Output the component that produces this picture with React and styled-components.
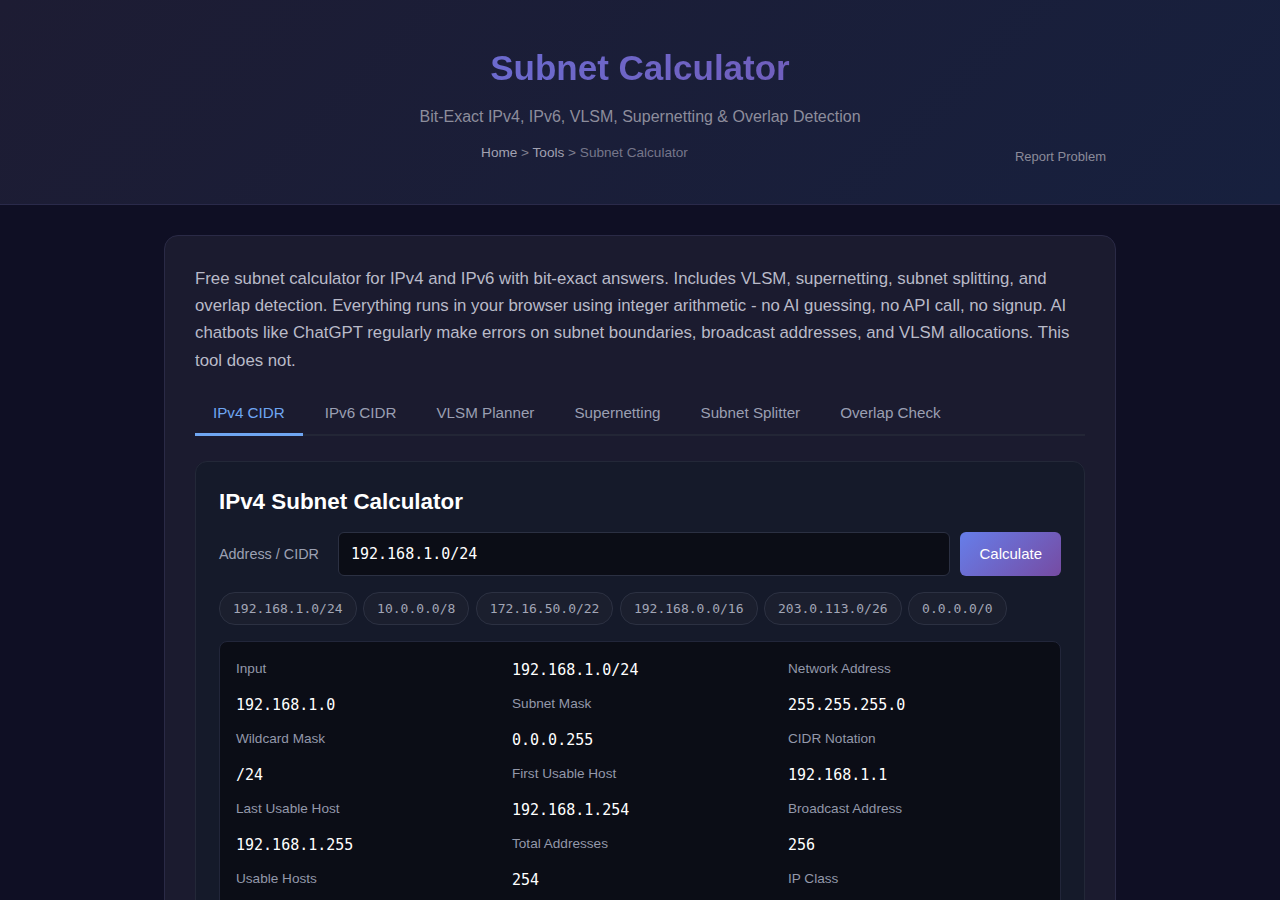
import { createGlobalStyle, styled } from "styled-components";

const GlobalStyle = createGlobalStyle`
  html, body {
    margin: 0;
    padding: 0;
    background: #0f0f24;
    font-family: "Liberation Sans", Arial, sans-serif;
    color: #e4e6f0;
  }
  * {
    box-sizing: border-box;
  }
`;

const tabs = ["IPv4 CIDR", "IPv6 CIDR", "VLSM Planner", "Supernetting", "Subnet Splitter", "Overlap Check"];

const examples = ["192.168.1.0/24", "10.0.0.0/8", "172.16.50.0/22", "192.168.0.0/16", "203.0.113.0/26", "0.0.0.0/0"];

// label / value pairs, they flow through a 3 column grid
const results = [
  ["Input", "192.168.1.0/24"],
  ["Network Address", "192.168.1.0"],
  ["Subnet Mask", "255.255.255.0"],
  ["Wildcard Mask", "0.0.0.255"],
  ["CIDR Notation", "/24"],
  ["First Usable Host", "192.168.1.1"],
  ["Last Usable Host", "192.168.1.254"],
  ["Broadcast Address", "192.168.1.255"],
  ["Total Addresses", "256"],
  ["Usable Hosts", "254"],
  ["IP Class", "C"],
  ["Address Type", "Private (RFC 1918)"],
];

export default function App() {
  return (
    <>
      <GlobalStyle />
      <SHeader>
        <STitle>Subnet Calculator</STitle>
        <SSubtitle>Bit-Exact IPv4, IPv6, VLSM, Supernetting &amp; Overlap Detection</SSubtitle>
        <SNavRow>
          <SCrumbs>
            <a href="#">Home</a> &gt; <a href="#">Tools</a> &gt; <span>Subnet Calculator</span>
          </SCrumbs>
          <SReport href="#">Report Problem</SReport>
        </SNavRow>
      </SHeader>

      <SCard>
        <SIntro>
          Free subnet calculator for IPv4 and IPv6 with bit-exact answers. Includes VLSM, supernetting, subnet
          splitting, and overlap detection. Everything runs in your browser using integer arithmetic - no AI guessing,
          no API call, no signup. AI chatbots like ChatGPT regularly make errors on subnet boundaries, broadcast
          addresses, and VLSM allocations. This tool does not.
        </SIntro>

        <STabBar>
          {tabs.map((t, i) => (
            <STab key={t} $active={i === 0}>
              {t}
            </STab>
          ))}
        </STabBar>

        <SPanel>
          <SPanelTitle>IPv4 Subnet Calculator</SPanelTitle>
          <SInputRow>
            <SLabel htmlFor="cidr">Address / CIDR</SLabel>
            <SInput id="cidr" defaultValue="192.168.1.0/24" />
            <SButton>Calculate</SButton>
          </SInputRow>
          <SChips>
            {examples.map((e) => (
              <SChip key={e}>{e}</SChip>
            ))}
          </SChips>
          <SResults>
            {results.map(([k, v]) => (
              <Pair key={k} label={k} value={v} />
            ))}
          </SResults>
        </SPanel>
      </SCard>
    </>
  );
}

function Pair({ label, value }) {
  return (
    <>
      <SKey>{label}</SKey>
      <SValue>{value}</SValue>
    </>
  );
}

const SHeader = styled.header`
  background: linear-gradient(135deg, #1d1c33 0%, #17203e 100%);
  border-bottom: 1px solid #2a2a4a;
  padding: 47px 0 33px;
  text-align: center;
`;

const STitle = styled.h1`
  margin: 0;
  font-size: 35px;
  line-height: 42px;
  font-weight: 700;
  background: linear-gradient(90deg, #667eea, #764ba2);
  -webkit-background-clip: text;
  background-clip: text;
  color: transparent;
`;

const SSubtitle = styled.p`
  margin: 16px 0 0;
  font-size: 16px;
  line-height: 24px;
  color: #8d8d9c;
`;

const SNavRow = styled.div`
  width: 952px;
  margin: 14px auto 0;
  display: flex;
  align-items: flex-start;
`;

const SCrumbs = styled.div`
  flex: 1;
  text-align: center;
  font-size: 13.6px;
  line-height: 20px;
  color: #80808f;
  a {
    color: #a2a2b2;
    text-decoration: none;
  }
  span {
    color: #76768a;
  }
`;

const SReport = styled.a`
  padding: 4px 10px;
  font-size: 13px;
  line-height: 20px;
  color: #8b8b99;
  text-decoration: none;
`;

const SCard = styled.main`
  width: 952px;
  margin: 30px auto 0;
  background: #1b1b2f;
  border: 1px solid #2a2a46;
  border-radius: 14px;
  padding: 29px 30px 40px;
`;

const SIntro = styled.p`
  margin: 0;
  font-size: 16.8px;
  line-height: 27.2px;
  color: #b9bac8;
`;

const STabBar = styled.nav`
  display: flex;
  gap: 4px;
  margin-top: 19px;
  border-bottom: 2px solid #232636;
`;

const STab = styled.button`
  background: none;
  border: none;
  border-bottom: 3px solid ${(p) => (p.$active ? "#6fa6f2" : "transparent")};
  margin-bottom: -2px;
  padding: 10px 18px 10px;
  font-family: inherit;
  font-size: 15.2px;
  line-height: 20px;
  color: ${(p) => (p.$active ? "#6fa6f2" : "#9a9fb2")};
  cursor: pointer;
`;

const SPanel = styled.section`
  margin-top: 25px;
  background: #151a2a;
  border: 1px solid #232838;
  border-radius: 12px;
  padding: 26px 23px 30px;
`;

const SPanelTitle = styled.h2`
  margin: 0;
  font-size: 22.4px;
  line-height: 27px;
  font-weight: 700;
  color: #ffffff;
`;

const SInputRow = styled.div`
  display: flex;
  align-items: center;
  gap: 10px;
  margin-top: 17px;
`;

const SLabel = styled.label`
  font-size: 14.4px;
  color: #9ca1b3;
  margin-right: 9px;
`;

const SInput = styled.input`
  flex: 1;
  height: 44px;
  background: #0b0d16;
  border: 1px solid #2b3042;
  border-radius: 6px;
  padding: 0 12px;
  font-family: "DejaVu Sans Mono", monospace;
  font-size: 15px;
  color: #ffffff;
  outline: none;
`;

const SButton = styled.button`
  height: 44px;
  padding: 0 19px;
  border: none;
  border-radius: 6px;
  background: linear-gradient(135deg, #667eea 0%, #764ba2 100%);
  font-family: inherit;
  font-size: 15px;
  color: #ffffff;
  cursor: pointer;
`;

const SChips = styled.div`
  display: flex;
  flex-wrap: wrap;
  gap: 6.5px;
  margin-top: 16px;
`;

const SChip = styled.button`
  height: 33px;
  padding: 0 13px;
  background: #1b1f2e;
  border: 1px solid #2c3142;
  border-radius: 16px;
  font-family: "DejaVu Sans Mono", monospace;
  font-size: 13px;
  color: #a2a6b6;
  cursor: pointer;
`;

const SResults = styled.dl`
  margin: 16px 0 0;
  background: #0b0d16;
  border: 1px solid #22263a;
  border-radius: 8px;
  padding: 17px 16px 16px 16px;
  display: grid;
  grid-template-columns: repeat(3, 1fr);
  column-gap: 20px;
  row-gap: 12px;
`;

const SKey = styled.dt`
  margin: 0;
  font-size: 13.6px;
  line-height: 20px;
  color: #9398aa;
`;

const SValue = styled.dd`
  margin: 0;
  font-family: "DejaVu Sans Mono", monospace;
  font-size: 15px;
  line-height: 23px;
  color: #ffffff;
`;
